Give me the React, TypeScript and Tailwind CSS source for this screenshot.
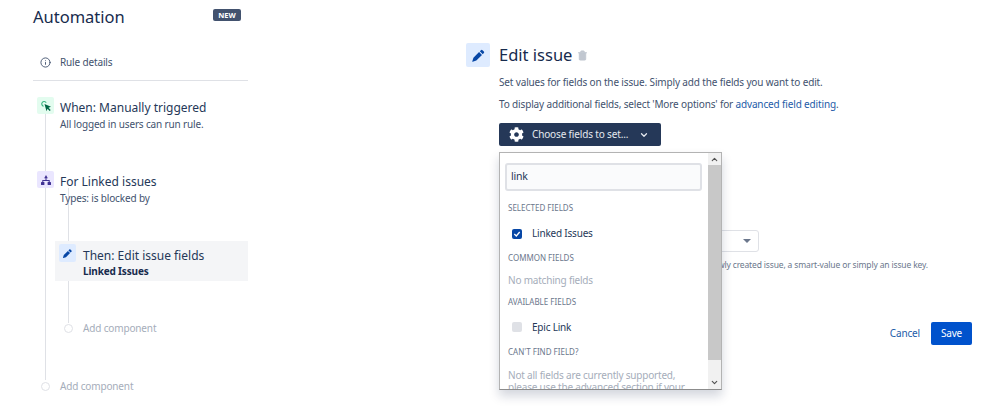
import { ChevronDown, ChevronUp, Info, Trash2 } from "lucide-react";
import { FaCog } from "react-icons/fa";

const font = "font-['Noto_Sans',sans-serif]";

function PencilIcon({ size }: { size: number }) {
  return (
    <svg width={size} height={size} viewBox="0 0 16 16" fill="#0747a6">
      <path d="M10.6 2.3a1.2 1.2 0 0 1 1.7 0l1.4 1.4a1.2 1.2 0 0 1 0 1.7l-1.2 1.2-3.1-3.1zM8.6 4.3l3.1 3.1-6 6-3.9 1.2a.3.3 0 0 1-.4-.4l1.2-3.9z" />
    </svg>
  );
}

function ClickIcon() {
  return (
    <svg width="12" height="12" viewBox="0 0 12 12" fill="none">
      <path d="M4.500 4l6.500 2.800-2.500 1 2.200 2.200-1 1-2.200-2.200-1 2.500z" fill="#006644" />
      <path d="M3.600 6.200A2.400 2.400 0 1 1 6.200 2.600" stroke="#36b37e" strokeWidth="1.100" />
    </svg>
  );
}

function TreeIcon() {
  return (
    <svg width="12" height="12" viewBox="0 0 12 12" fill="#403294">
      <path d="M6 1L7.800 4.200H4.200z" />
      <rect x="1" y="8" width="3.400" height="3" rx="0.500" />
      <rect x="7.600" y="8" width="3.400" height="3" rx="0.500" />
      <path d="M5.500 4h1v2h3.200v2h-1V7H3.300v1h-1V6h3.200z" />
    </svg>
  );
}

function GroupLabel({ children }: { children: string }) {
  return (
    <div className="h-[20px] pl-[3px] flex items-center text-[8px] leading-none text-[#6b778c] uppercase">
      {children}
    </div>
  );
}

function FieldsDropdown() {
  return (
    <div className="absolute left-[499px] top-[152px] w-[223px] h-[238px] bg-white border border-[#b3b3b3] border-b-[#8c8c8c] shadow-[0_6px_10px_rgba(9,30,66,0.18)] flex overflow-hidden z-10">
      <div className="flex-1 min-w-0 pl-[5px] pr-[6px] pt-[10px] overflow-hidden tracking-[-0.2px]">
        <div className="h-[28px] bg-[#fafbfc] border-2 border-[#dfe1e6] rounded-[3px] px-[4px] flex items-center text-[10.500px] text-[#253858]">
          link
        </div>
        <div className="mt-[7px] tracking-normal">
          <GroupLabel>Selected fields</GroupLabel>
        </div>
        <div className="mt-px h-[29px] flex items-center pl-[7px] gap-[10px] text-[10px] text-[#253858]">
          <span className="w-[10px] h-[10px] rounded-[2px] bg-[#0747a6] flex items-center justify-center">
            <svg width="8" height="8" viewBox="0 0 8 8" fill="none">
              <path d="M1.300 4l2 2 3.400-4" stroke="white" strokeWidth="1.300" />
            </svg>
          </span>
          Linked Issues
        </div>
        <div className="tracking-normal">
          <GroupLabel>Common fields</GroupLabel>
        </div>
        <div className="mt-px h-[23px] pl-[3px] flex items-center text-[10px] text-[#a5adba]">No matching fields</div>
        <div className="tracking-normal">
          <GroupLabel>Available fields</GroupLabel>
        </div>
        <div className="h-[30px] flex items-center pl-[7px] gap-[10px] text-[10px] text-[#253858]">
          <span className="w-[10px] h-[10px] rounded-[2px] bg-[#dfe1e6]" />
          Epic Link
        </div>
        <div className="tracking-normal">
          <GroupLabel>Can't find field?</GroupLabel>
        </div>
        <p className="mt-[7px] pl-[3px] w-[190px] text-[10px] leading-[12px] text-[#a5adba]">
          Not all fields are currently supported, please use the advanced section if your
        </p>
      </div>
      <div className="w-[13px] shrink-0 bg-[#f1f1f1] flex flex-col">
        <div className="h-[12px] flex items-center justify-center">
          <ChevronUp size={9} strokeWidth={3} color="#505050" />
        </div>
        <div className="h-[195px] bg-[#c8c8c8]" />
        <div className="flex-1 flex items-end justify-center pb-[2px]">
          <ChevronDown size={9} strokeWidth={3} color="#505050" />
        </div>
      </div>
    </div>
  );
}

export default function App() {
  return (
    <div className={`relative w-[999px] h-[414px] overflow-hidden bg-white flex text-[#172b4d] ${font}`}>
      {/* Rule sidebar */}
      <aside className="relative ml-[33px] w-[215px] shrink-0 tracking-[-0.15px]">
        <div className="absolute left-[12px] top-[114px] w-px h-[266px] bg-[#dfe1e6]" />
        <div className="absolute left-[35px] top-[188px] w-px h-[135px] bg-[#dfe1e6]" />

        <div className="h-[35px] flex items-center justify-between pr-[7px]">
          <h1 className="text-[16.500px] leading-none font-normal tracking-normal">Automation</h1>
          <span className="w-[28px] h-[12px] mb-[5px] rounded-[2px] bg-[#42526e] text-white text-[7.500px] font-bold leading-[12px] text-center tracking-normal">
            NEW
          </span>
        </div>

        <div className="mt-[14px] h-[32px] flex items-center border-b border-[#dfe1e6] pb-[5px] text-[10px] text-[#42526e]">
          <span className="w-[27px] pl-[7px]">
            <Info size={11} />
          </span>
          Rule details
        </div>

        <div className="relative mt-[16px] flex h-[74px]">
          <span className="ml-[4px] w-[17px] h-[17px] bg-[#e3fcef] rounded-[2px] flex items-center justify-center">
            <ClickIcon />
          </span>
          <div className="ml-[6px]">
            <div className="text-[12px] leading-[17px] mt-[2px] text-[#253858] tracking-normal">When: Manually triggered</div>
            <div className="text-[10px] leading-[14px] mt-[1px] text-[#42526e]">All logged in users can run rule.</div>
          </div>
        </div>

        <div className="relative flex h-[70px]">
          <span className="ml-[4px] w-[17px] h-[17px] bg-[#eae6ff] rounded-[2px] flex items-center justify-center">
            <TreeIcon />
          </span>
          <div className="ml-[6px]">
            <div className="text-[12px] leading-[17px] mt-[2px] text-[#253858] tracking-normal">For Linked issues</div>
            <div className="text-[10px] leading-[14px] mt-[1px] text-[#42526e]">Types: is blocked by</div>
          </div>
        </div>

        <div className="relative ml-[22px] h-[40px] bg-[#f4f5f7] flex pt-[3px]">
          <span className="ml-[4px] w-[17px] h-[18px] bg-[#deebff] rounded-[2px] flex items-center justify-center">
            <PencilIcon size={11} />
          </span>
          <div className="ml-[7px]">
            <div className="text-[12px] leading-[17px] mt-[3px] text-[#253858] tracking-normal">Then: Edit issue fields</div>
            <div className="text-[10px] leading-[14px] font-bold text-[#172b4d]">Linked Issues</div>
          </div>
        </div>

        <div className="relative mt-[41px] ml-[31px] h-[12px] flex items-center gap-[10px] text-[10px] text-[#a5adba]">
          <span className="w-[9px] h-[9px] rounded-full border border-[#dfe1e6] bg-white" />
          Add component
        </div>

        <div className="relative mt-[46px] ml-[8px] h-[12px] flex items-center gap-[10px] text-[10px] text-[#a5adba]">
          <span className="w-[9px] h-[9px] rounded-full border border-[#dfe1e6] bg-white" />
          Add component
        </div>
      </aside>

      {/* Component editor */}
      <main className="ml-[218px] w-[506px] shrink-0 pt-[43px] tracking-[-0.15px]">
        <div className="flex items-center h-[24px]">
          <span className="w-[24px] h-[24px] bg-[#deebff] rounded-[2px] flex items-center justify-center">
            <PencilIcon size={15} />
          </span>
          <h2 className="ml-[9px] text-[16.500px] leading-none font-normal tracking-normal">Edit issue</h2>
          <Trash2 size={11} className="ml-[5px] mt-px" color="#c1c7d0" fill="#c1c7d0" />
        </div>

        <div className="pl-[33px]">
          <p className="mt-[8px] h-[14px] text-[10px] leading-[14px] text-[#42526e] whitespace-nowrap">
            Set values for fields on the issue. Simply add the fields you want to edit.
          </p>
          <p className="mt-[8px] h-[14px] text-[10px] leading-[14px] text-[#42526e] whitespace-nowrap">
            To display additional fields, select 'More options' for{" "}
            <span className="text-[#1d5ba8]">advanced field editing</span>.
          </p>

          <div className="mt-[12px] w-[162px] h-[23px] rounded-[2px] bg-[#253858] text-[#e4e8ef] flex items-center text-[10px] pl-[10px]">
            <FaCog size={15} color="white" />
            <span className="ml-[8px]">Choose fields to set...</span>
            <ChevronDown size={10} strokeWidth={3} className="ml-[11px]" />
          </div>

          {/* Field behind the open list */}
          <div className="mt-[84px] w-[260px] h-[22px] rounded-[3px] border border-[#dfe1e6] flex items-center justify-end pr-[7px]">
            <span className="w-0 h-0 border-x-[4px] border-x-transparent border-t-[4px] border-t-[#6b778c]" />
          </div>
          <p className="mt-[6px] h-[13px] text-[8.500px] leading-[13px] text-[#6b778c] whitespace-nowrap text-right w-[429px]">
            Issue to link to: a newly created issue, a smart-value or simply an issue key.
          </p>

          <div className="mt-[51px] flex items-center justify-end gap-[11px]">
            <span className="text-[10px] text-[#1d5ba8]">Cancel</span>
            <span className="w-[41px] h-[23px] rounded-[2px] bg-[#0052cc] text-white text-[10px] flex items-center justify-center">
              Save
            </span>
          </div>
        </div>
      </main>

      <FieldsDropdown />
    </div>
  );
}
